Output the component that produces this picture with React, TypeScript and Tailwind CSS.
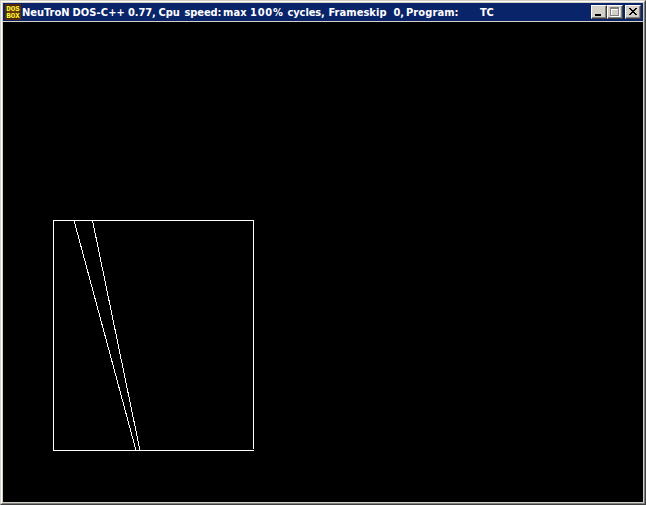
import type { ReactNode } from "react";

const words: { text: string; box: string }[] = [
  { text: "NeuTroN", box: "w-[50.5px] tracking-[0px]" },
  { text: "DOS-C++", box: "w-[55.5px] tracking-[0.1px]" },
  { text: "0.77,", box: "w-[30.5px] tracking-[-0.1px]" },
  { text: "Cpu", box: "w-[26px] tracking-[-0.1px]" },
  { text: "speed:", box: "w-[38.5px] tracking-[-0.1px]" },
  { text: "max", box: "w-[27px] tracking-[0.1px]" },
  { text: "100%", box: "w-[37.5px] tracking-[0.8px]" },
  { text: "cycles,", box: "w-[41px] tracking-[-0.1px]" },
  { text: "Frameskip", box: "w-[65px] tracking-[0.05px]" },
  { text: "0,", box: "w-[12.5px] tracking-[-0.1px]" },
  { text: "Program:", box: "w-[74px] tracking-[0.1px]" },
  { text: "TC", box: "w-[20px] tracking-[-0.15px]" },
];

function CaptionButton({ label, children }: { label: string; children: ReactNode }) {
  return (
    <button
      aria-label={label}
      className="h-[14px] w-4 shrink-0 border border-t-white border-l-white border-r-[#404040] border-b-[#404040] bg-[#d4d0c8] shadow-[inset_-1px_-1px_0_#808080]"
    >
      <svg width="14" height="12" shapeRendering="crispEdges" className="block">
        {children}
      </svg>
    </button>
  );
}

function DosBoxIcon() {
  return (
    <div className="ml-[2px] flex h-4 w-4 shrink-0 flex-col items-center border border-[#5c2c08] bg-[#6a3a10] pt-px font-['Liberation_Mono',monospace] text-[7.5px] leading-[7px] font-bold text-[#ffff30] shadow-[inset_0_0_0_1px_#482004]">
      <span className="h-[7px]">DOS</span>
      <span className="h-[7px]">BOX</span>
    </div>
  );
}

export default function App() {
  return (
    <div className="h-[505px] w-[646px] border border-t-[#d4d0c8] border-l-[#d4d0c8] border-r-[#404040] border-b-[#404040]">
      <div className="h-full border border-t-white border-l-white border-r-[#808080] border-b-[#808080]">
        <div className="flex h-full flex-col border border-[#d4d0c8] bg-black">
          <header className="flex h-[19px] shrink-0 items-center border-b border-[#d4d0c8] bg-[#0a246a]">
            <DosBoxIcon />
            <h1 className="ml-px flex flex-1 pt-[2px] font-['DejaVu_Sans_Condensed','DejaVu_Sans',sans-serif] text-[11px] leading-4 font-bold whitespace-pre text-white">
              {words.map((w) => (
                <span key={w.text} className={`${w.box} shrink-0`}>
                  {w.text}
                </span>
              ))}
            </h1>
            <div className="mr-[2px] flex">
              <CaptionButton label="Minimize">
                <rect x="3" y="8" width="6" height="2" fill="#000" />
              </CaptionButton>
              <CaptionButton label="Maximize">
                <path d="M3 2h9v9H3zM4 4v6h7V4z" fill="#fff" fillRule="evenodd" />
                <path d="M2 1h9v9H2zM3 3v6h7V3z" fill="#808080" fillRule="evenodd" />
              </CaptionButton>
              <div className="ml-[2px] flex">
                <CaptionButton label="Close">
                  <path
                    d="M3 2h2v1h1v1h2v-1h1v-1h2v1h-1v1h-1v1h-1v1h1v1h1v1h1v1h-2v-1h-1v-1h-2v1h-1v1h-2v-1h1v-1h1v-1h1v-1h-1v-1h-1v-1h-1z"
                    fill="#000"
                  />
                </CaptionButton>
              </div>
            </div>
          </header>
          <main className="flex-1">
            <svg width="640" height="480" viewBox="3 22 640 480" shapeRendering="crispEdges" className="block">
              <g fill="#fff">
                <rect x="53" y="220" width="201" height="1" />
                <rect x="53" y="220" width="1" height="231" />
                <rect x="253" y="220" width="1" height="229" />
                <rect x="53" y="450" width="201" height="1" />
              </g>
              <g stroke="#fff" strokeWidth="1">
                <line x1="74" y1="220.5" x2="136" y2="450.5" />
                <line x1="92.5" y1="220.5" x2="140" y2="450.5" />
              </g>
            </svg>
          </main>
        </div>
      </div>
    </div>
  );
}
